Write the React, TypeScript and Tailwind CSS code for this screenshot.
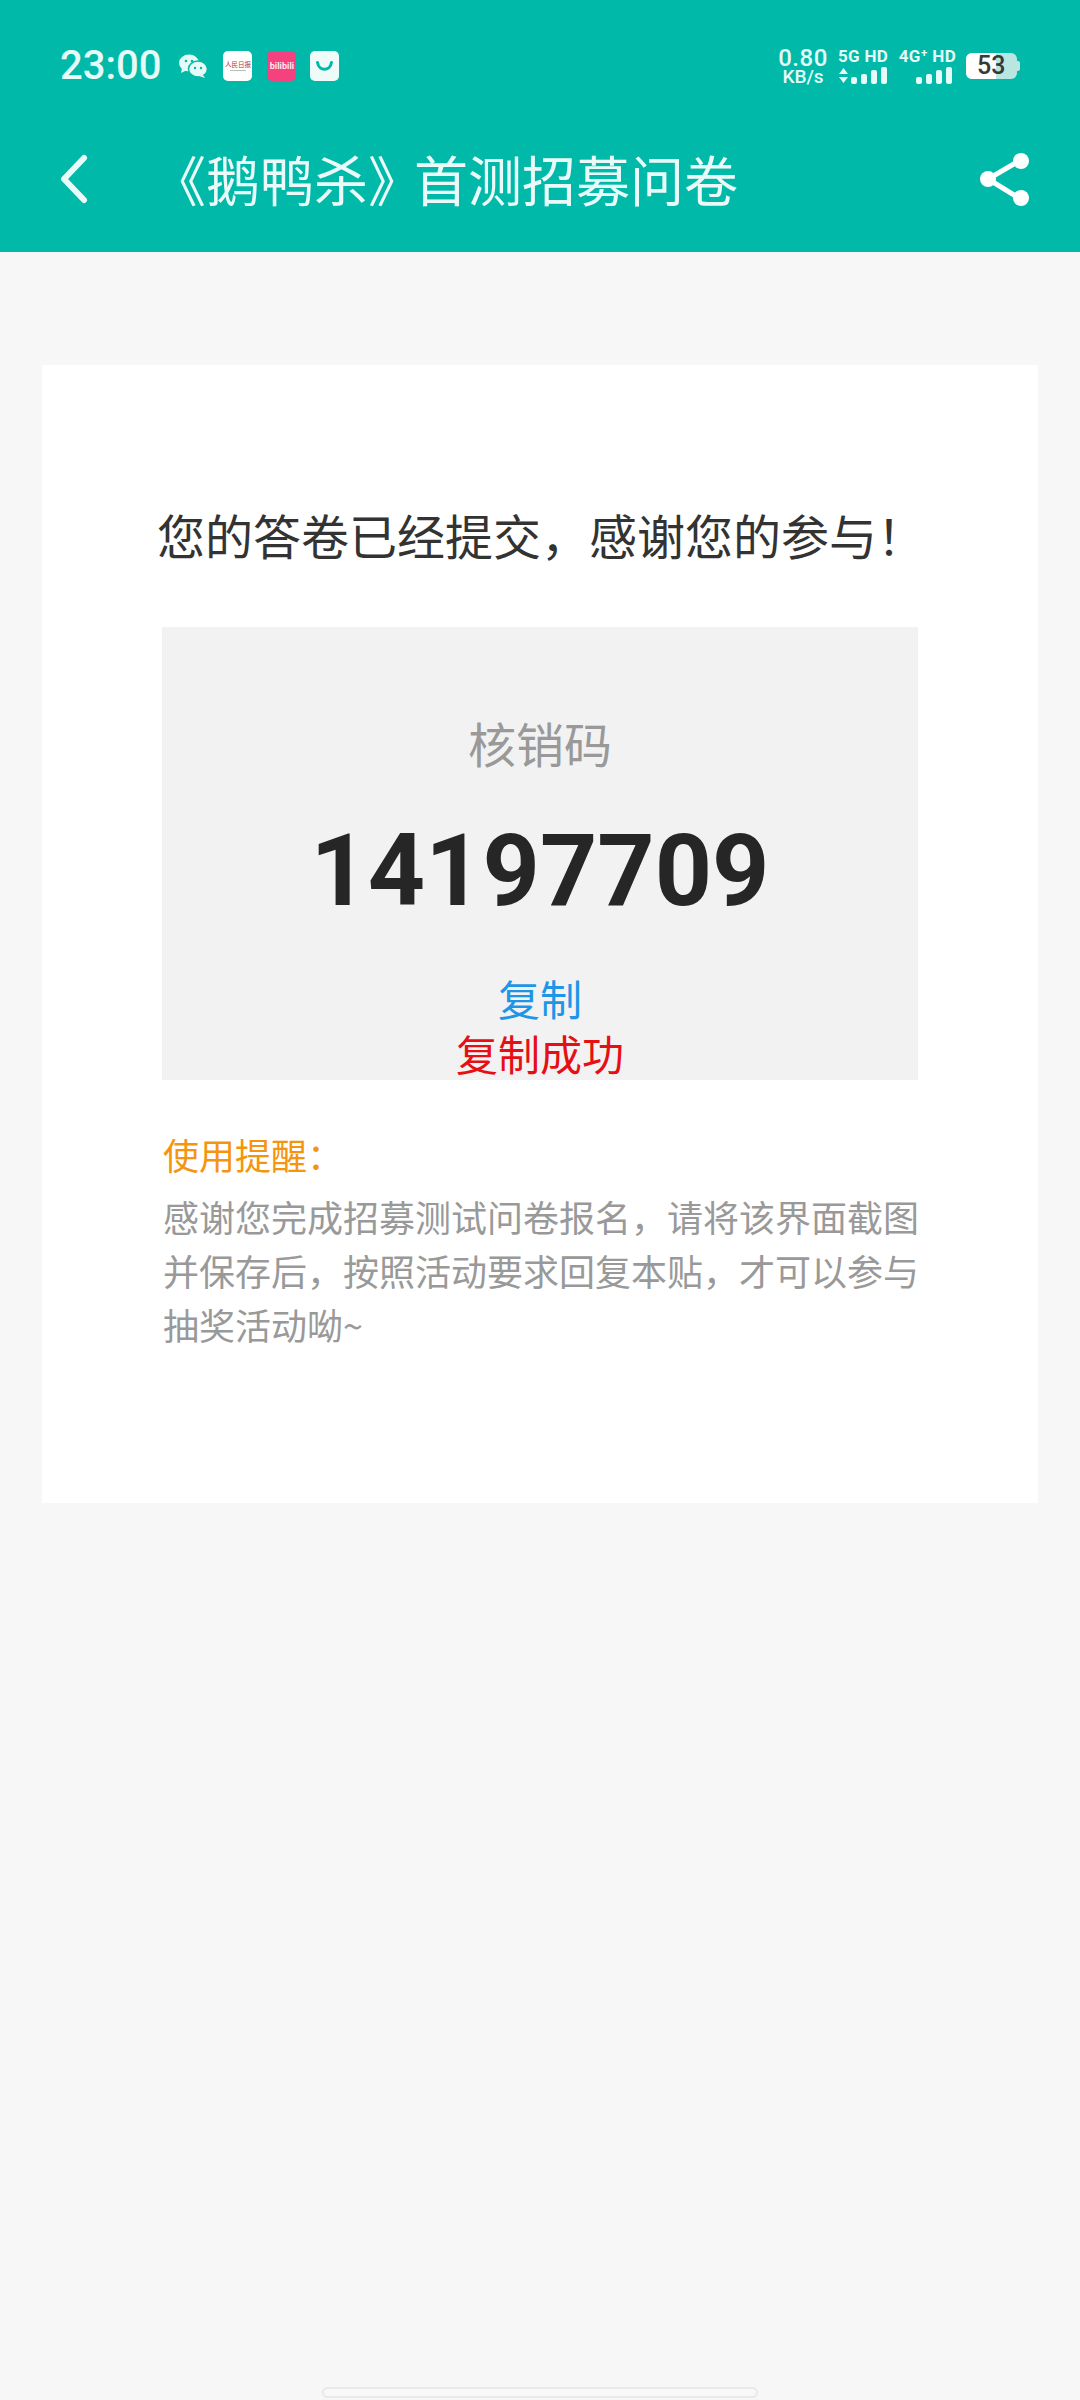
import React from "react";

const Bars = ({ arrows }: { arrows?: boolean }) => (
  <svg width="50" height="18" viewBox="0 0 50 18" className="block">
    {arrows && <path d="M1 7l4.5-6 4.5 6zM1 10h9l-4.500 6z" fill="#e6faf7" />}
    <rect x="13" y="10" width="6" height="7" rx="2" fill="#e6faf7" />
    <rect x="23" y="7" width="6" height="10" rx="2" fill="#e6faf7" />
    <rect x="33" y="3" width="6" height="14" rx="2" fill="#e6faf7" />
    <rect x="43" y="0" width="6" height="17" rx="2" fill="#e6faf7" />
  </svg>
);

const COMMA = "\uFF0C";
const BANG = "\uFF01";
const COLON = "\uFF1A";

export default function App() {
  return (
    <div className="min-h-[2400px] w-[1080px] flex flex-col bg-[#f7f7f7] font-['Noto_Sans_CJK_SC','Noto_Sans',sans-serif]">
      <header className="h-[252px] bg-[#00b9a9] text-white flex flex-col shrink-0">
        <div className="h-[132px] pl-[60px] pr-[60px] flex items-center">
          <span className="font-['Roboto',sans-serif] font-medium text-[40px] leading-none text-[#e6faf7]">23:00</span>
          <svg width="30" height="26" viewBox="0 0 30 26" className="ml-[17px]">
            <ellipse cx="11" cy="10" rx="10" ry="8.500" fill="#e6faf7" />
            <path d="M4 15l-1 5 6-3z" fill="#e6faf7" />
            <ellipse cx="20" cy="16" rx="9.500" ry="8" fill="#e6faf7" stroke="#00b9a9" strokeWidth="1.500" />
            <path d="M25 22l2 3-6-2z" fill="#e6faf7" />
            <circle cx="8" cy="8" r="1.300" fill="#00b9a9" />
            <circle cx="14" cy="8" r="1.300" fill="#00b9a9" />
            <circle cx="17" cy="15" r="1.200" fill="#00b9a9" />
            <circle cx="23" cy="15" r="1.200" fill="#00b9a9" />
          </svg>
          <div className="ml-[15px] w-[29px] h-[30px] rounded-[5px] bg-white flex flex-col items-center justify-center overflow-hidden">
            <span className="text-[#b8323c] text-[6.5px] leading-none whitespace-nowrap">人民日报</span>
            <span className="mt-[2px] w-[16px] h-[1px] bg-[#bbb]"></span>
          </div>
          <div className="ml-[15px] w-[29px] h-[30px] rounded-[5px] bg-[#f5417e] flex items-center justify-center overflow-hidden">
            <span className="text-[#ffe6ef] text-[9px] leading-none font-bold font-['Roboto',sans-serif]">bilibili</span>
          </div>
          <div className="ml-[14px] w-[29px] h-[30px] rounded-[5px] bg-[#eefbf9] flex items-center justify-center">
            <svg width="19" height="12" viewBox="0 0 19 12">
              <path d="M2.500 2.500c1.500 9 12.500 9 14 0" fill="none" stroke="#00b9a9" strokeWidth="3" strokeLinecap="round" />
            </svg>
          </div>

          <div className="ml-auto flex items-center text-[#e6faf7] font-['Roboto',sans-serif]">
            <div className="flex flex-col items-center w-[50px]">
              <span className="text-[24px] leading-[20px] font-medium tracking-[0.5px]">0.80</span>
              <span className="text-[19px] leading-[17px] font-medium">KB/s</span>
            </div>
            <div className="ml-[10px] flex flex-col w-[50px]">
              <span className="text-[17px] leading-[16px] font-bold whitespace-nowrap tracking-[0.3px]">5G HD</span>
              <div className="mt-[3px]"><Bars arrows /></div>
            </div>
            <div className="ml-[9px] flex flex-col items-end w-[59px]">
              <span className="text-[17px] leading-[16px] font-bold whitespace-nowrap tracking-[0.3px]">4G⁺ HD</span>
              <div className="mt-[3px] mr-[3px]"><Bars /></div>
            </div>
            <div className="ml-[10px] relative flex items-center h-[26px] w-[54px]">
              <div className="w-[51px] h-[26px] rounded-[6px] overflow-hidden bg-[#b9e6e1] flex">
                <div className="w-[30px] h-full bg-white"></div>
              </div>
              <div className="w-[3px] h-[10px] bg-[#b9e6e1] rounded-r-[2px]"></div>
              <span className="absolute left-[11px] top-0 h-[26px] leading-[26px] text-[#333b3b] text-[25px] font-medium">53</span>
            </div>
          </div>
        </div>

        <div className="h-[120px] flex items-center">
          <svg width="32" height="52" viewBox="0 0 32 52" className="ml-[57px] -mt-[26px]">
            <path d="M27 5 L7 26 L27 47" fill="none" stroke="#eafaf8" strokeWidth="6" strokeLinecap="round" strokeLinejoin="round" />
          </svg>
          <h1 className="ml-[63px] -mt-[26px] text-[54px] leading-none font-normal text-[#eafaf8] whitespace-nowrap">
            《鹅鸭杀<span className="tracking-[-8px]">》</span>首测招募问卷
          </h1>
          <svg width="54" height="56" viewBox="0 0 54 56" className="ml-auto mr-[47px] -mt-[25px]">
            <path d="M40 9 L9 27 L40 46" fill="none" stroke="#fff" strokeWidth="5" />
            <circle cx="42" cy="9" r="8" fill="#fff" />
            <circle cx="9" cy="27" r="8" fill="#fff" />
            <circle cx="42" cy="46" r="8" fill="#fff" />
          </svg>
        </div>
      </header>

      <main className="mx-[42px] mt-[113px] h-[1138px] bg-white flex flex-col">
        <h2 className="mt-[142px] ml-[115px] text-[48px] leading-[54px] font-normal text-[#333] whitespace-nowrap">
          您的答卷已经提交{COMMA}感谢您的参与{BANG}
        </h2>
        <section className="mt-[66px] ml-[120px] w-[756px] h-[453px] bg-[#f2f2f2] flex flex-col items-center">
          <p className="mt-[85px] text-[48px] leading-[60px] text-[#999]">核销码</p>
          <p className="mt-[49px] font-['Roboto',sans-serif] font-bold text-[100px] leading-[100px] text-[#262626]">14197709</p>
          <p className="mt-[49px] text-[42px] leading-[56px] text-[#1e96e8]">复制</p>
          <p className="text-[42px] leading-[54px] text-[#e60f14]">复制成功</p>
        </section>
        <section className="ml-[121px] w-[760px] mt-[47px]">
          <p className="text-[36px] leading-[54px] text-[#f5950f]">使用提醒{COLON}</p>
          <p className="text-[36px] leading-[54px] text-[#999] mt-[8px]">
            感谢您完成招募测试问卷报名{COMMA}请将该界面截图
            <br />
            并保存后{COMMA}按照活动要求回复本贴{COMMA}才可以参与
            <br />
            抽奖活动呦~
          </p>
        </section>
      </main>

      <div className="mt-auto mb-[2px] mx-auto w-[436px] h-[11px] rounded-full bg-[#f8f8f8] border-2 border-[#e9e9e9]"></div>
    </div>
  );
}
